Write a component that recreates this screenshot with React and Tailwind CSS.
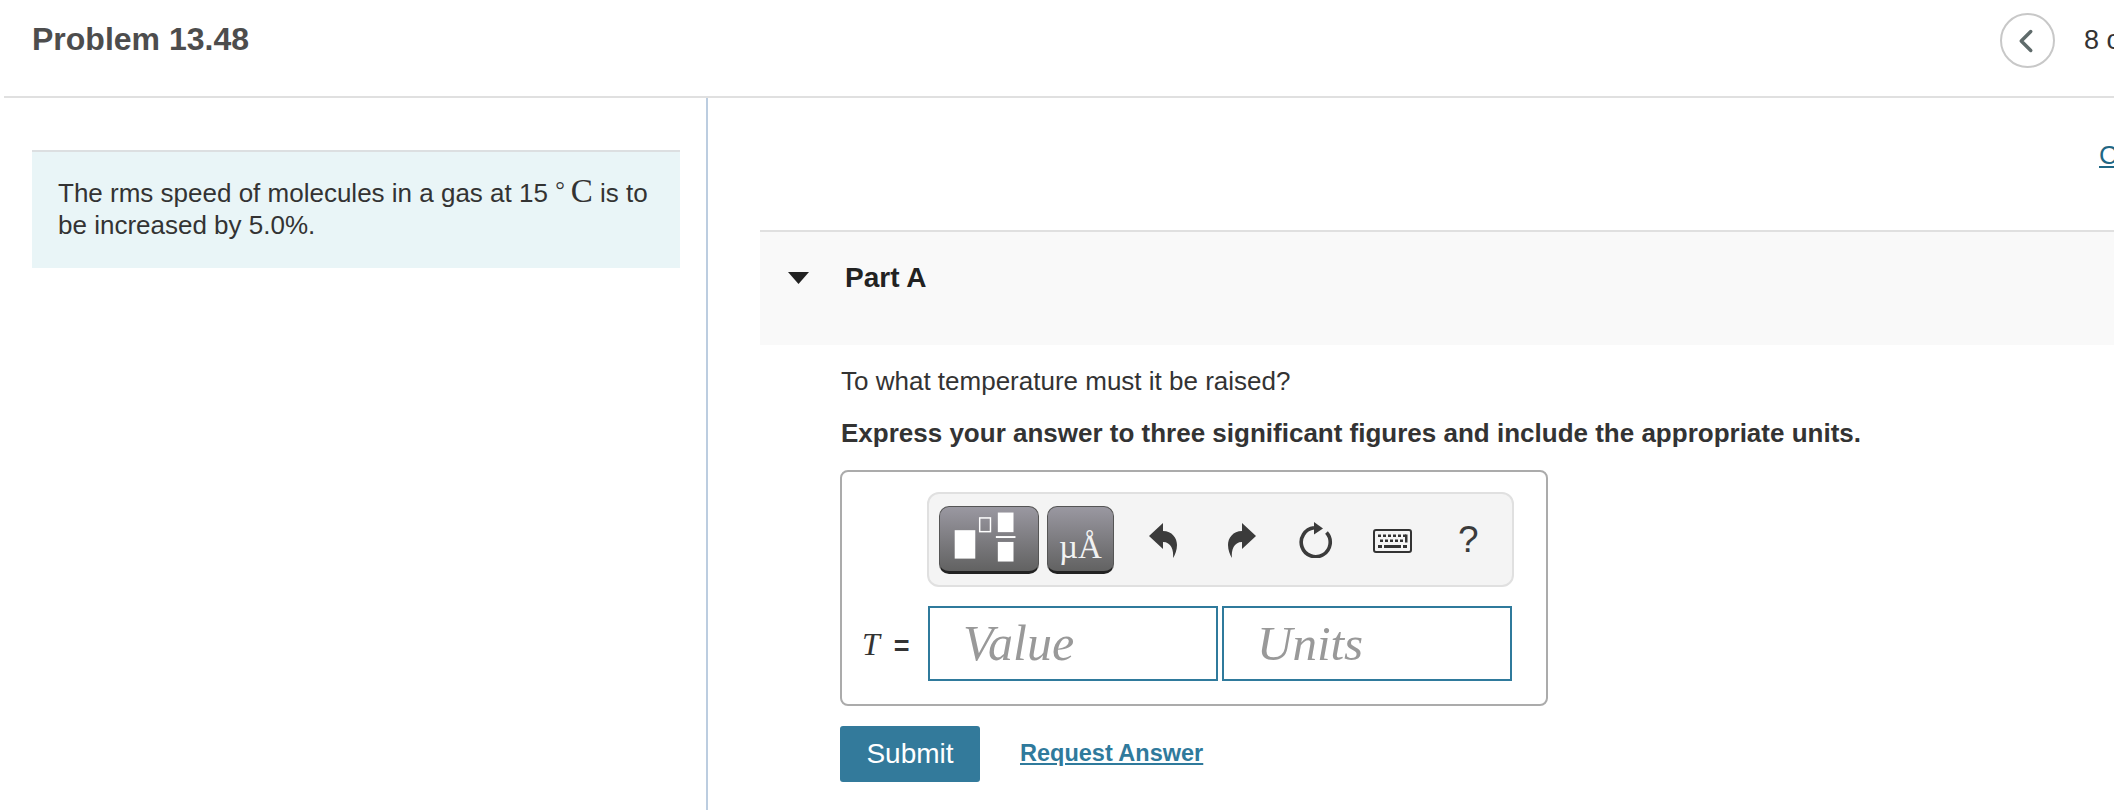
import { ChevronLeft } from "lucide-react";

const sans = { fontFamily: '"Liberation Sans", Arial, sans-serif' };
const serif = { fontFamily: '"Liberation Serif", serif' };

const FractionIcon = () => (
    <svg width="100" height="68" viewBox="0 0 100 68" fill="#fff">
        <rect x="15" y="25" width="21" height="29" />
        <rect x="40.5" y="12.5" width="11" height="14" fill="none" stroke="#fff" strokeWidth="1.5" />
        <rect x="59" y="7" width="16" height="20" />
        <rect x="57" y="31" width="20" height="2" />
        <rect x="59" y="37" width="16" height="20" />
    </svg>
);

const UndoIcon = ({ flip }) => (
    <svg
        width="28"
        height="36"
        viewBox="0 0 28 36"
        fill="#3b3b3b"
        className={flip ? "-scale-x-100" : ""}
    >
        <path d="M0 14 L14 1 V9 C23 9 28 16 28 23 C28 28 26 33 24 36 C25 28 22 20 14 20 V27 Z" />
    </svg>
);

const RefreshIcon = () => (
    <svg width="34" height="36" viewBox="0 0 34 36" fill="none">
        <path d="M27.5 10.5 A14.5 14.5 0 1 1 15 5.8" stroke="#3b3b3b" strokeWidth="3.6" />
        <path d="M15 0 L24 6.5 L15 12.5 Z" fill="#3b3b3b" />
    </svg>
);

const KeyboardIcon = () => (
    <svg width="39" height="24" viewBox="0 0 39 24">
        <rect x="1" y="1" width="37" height="22" rx="2" fill="#f4f4f4" stroke="#333" strokeWidth="2" />
        <g fill="#333">
            {[5, 10, 15, 20, 25, 30].map((x) => (
                <rect key={x} x={x} y="5.5" width="3" height="2.5" />
            ))}
            {[7, 12, 17, 22, 27].map((x) => (
                <rect key={x} x={x} y="10.5" width="3" height="2.5" />
            ))}
            <rect x="32" y="5.5" width="2.5" height="8" />
            <rect x="5" y="16" width="4" height="3" />
            <rect x="11" y="16" width="17" height="3" />
            <rect x="30" y="16" width="4" height="3" />
        </g>
    </svg>
);

export default function App() {
    return (
        <div
            className="w-[2114px] h-[810px] overflow-hidden bg-white flex flex-col text-[#333]"
            style={sans}
        >
            <header className="ml-1 h-[98px] shrink-0 border-b-2 border-[#e0e0e0] flex items-start justify-between">
                <h1 className="pl-7 pt-[20px] text-[32px] leading-[38px] font-bold text-[#4d4d4d]">
                    Problem 13.48
                </h1>
                <div className="flex items-center gap-[29px] pt-[13px] w-[114px] shrink-0 overflow-hidden">
                    <div className="w-[55px] h-[55px] shrink-0 rounded-full border-2 border-[#c8c8c8] flex items-center justify-center">
                        <ChevronLeft size={38} strokeWidth={2.2} className="text-[#5f6b6b] -ml-1" />
                    </div>
                    <span className="text-[27px] whitespace-nowrap">8 of 10</span>
                </div>
            </header>

            <div className="flex flex-1 min-h-0">
                <aside className="w-[708px] shrink-0 border-r-2 border-[#bccde0] pl-8 pr-[26px] pt-[52px]">
                    <div className="h-[118px] bg-[#e9f5f7] border-t-2 border-[#dcdfe1] pl-[26px] pr-4 pt-[25px] text-[26px] leading-[32px]">
                        The rms speed of molecules in a gas at 15{" "}
                        <span className="text-[33px] leading-[20px]" style={serif}>
                            <span className="relative -top-1 mr-[6px] text-[24px]">°</span>C
                        </span>{" "}
                        is to be increased by 5.0%.
                    </div>
                </aside>

                <main className="flex-1 min-w-0 pl-[52px] relative">
                    <a className="absolute top-[41px] left-[1391px] text-[26px] leading-[32px] text-[#1f6784] underline whitespace-nowrap">
                        Constants
                    </a>
                    <div className="mt-[132px] h-[115px] border-t-2 border-[#e0e0e0] bg-[#f9f9f9] flex items-start pl-7 pt-[31px]">
                        <svg width="21" height="12" viewBox="0 0 21 12" className="mt-[9px]">
                            <path d="M0 0 H21 L10.5 12 Z" fill="#222" />
                        </svg>
                        <span className="ml-[36px] text-[28px] leading-[30px] font-bold text-[#222]">
                            Part A
                        </span>
                    </div>

                    <div className="pl-[81px]">
                        <p className="mt-[20px] text-[26px] leading-[32px]">
                            To what temperature must it be raised?
                        </p>
                        <p className="mt-[20px] text-[26px] leading-[32px] font-bold">
                            Express your answer to three significant figures and include the appropriate units.
                        </p>

                        <div className="mt-[21px] -ml-px w-[708px] h-[236px] border-2 border-[#ababab] rounded-lg pl-[20px]">
                            <div className="ml-[65px] mt-[20px] w-[587px] h-[95px] border-2 border-[#e0e0e0] rounded-xl bg-[#f4f4f4] flex items-center pl-[10px]">
                                <button className="w-[100px] h-[68px] rounded-[10px] border border-[#555] border-b-[3px] border-b-[#222] bg-linear-to-b from-[#9a98a1] to-[#626262] flex items-center justify-center overflow-hidden">
                                    <FractionIcon />
                                </button>
                                <button
                                    className="ml-[8px] w-[67px] h-[68px] rounded-[10px] border border-[#555] border-b-[3px] border-b-[#222] bg-linear-to-b from-[#9a98a1] to-[#626262] text-[#f2f2f2] text-[33px] leading-[68px] pt-[6px]"
                                    style={serif}
                                >
                                    µÅ
                                </button>
                                <div className="ml-[35px]"><UndoIcon /></div>
                                <div className="ml-[51px]"><UndoIcon flip /></div>
                                <div className="ml-[43px]"><RefreshIcon /></div>
                                <div className="ml-[40px] mt-[3px]"><KeyboardIcon /></div>
                                <span className="ml-[46px] text-[37px] leading-none text-[#3b3b3b]">?</span>
                            </div>

                            <div className="flex items-center mt-[19px]">
                                <span className="w-[66px] shrink-0 text-[26px] whitespace-nowrap">
                                    <i className="text-[32px]" style={serif}>T</i>
                                    <span className="ml-[14px] font-bold text-[27px]">=</span>
                                </span>
                                <div
                                    className="w-[290px] h-[75px] border-2 border-[#2f7a9c] pl-[33px] text-[50px] leading-[71px] italic text-[#999]"
                                    style={serif}
                                >
                                    Value
                                </div>
                                <div
                                    className="ml-[4px] w-[290px] h-[75px] border-2 border-[#2f7a9c] pl-[33px] text-[49px] leading-[71px] italic text-[#999]"
                                    style={serif}
                                >
                                    Units
                                </div>
                            </div>
                        </div>

                        <div className="flex items-center mt-[20px] -ml-px">
                            <button className="w-[140px] h-[56px] rounded-[3px] bg-[#337a9b] text-white text-[28px]">
                                Submit
                            </button>
                            <a className="ml-[40px] text-[23.5px] font-bold text-[#2f7a9c] underline">
                                Request Answer
                            </a>
                        </div>
                    </div>
                </main>
            </div>
        </div>
    );
}
